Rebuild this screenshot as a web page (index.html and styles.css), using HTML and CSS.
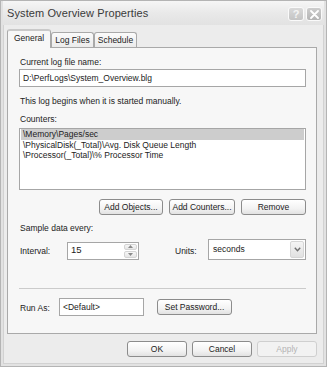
FILE: index.html
```html
<!DOCTYPE html>
<html lang="en">
<head>
    <meta charset="UTF-8">
    <title>System Overview Properties</title>
    <link rel="stylesheet" href="styles.css">
</head>
<body>
    <div class="window">
        <div class="titlebar">
            <span class="title">System Overview Properties</span>
            <div class="caption-btns">
                <span class="cap-btn">?</span>
                <span class="cap-btn close">
                    <svg width="9" height="9" viewBox="0 0 9 9">
                        <path d="M1 1 L8 8 M8 1 L1 8" stroke="#fff" stroke-width="1.8" stroke-linecap="round"/>
                    </svg>
                </span>
            </div>
        </div>

        <div class="client">
            <div class="tabs">
                <div class="tab active">General</div>
                <div class="tab">Log Files</div>
                <div class="tab">Schedule</div>
            </div>

            <div class="panel">
                <div class="label top">Current log file name:</div>
                <div class="field filename">D:\PerfLogs\System_Overview.blg</div>

                <div class="label note">This log begins when it is started manually.</div>

                <div class="label counters">Counters:</div>
                <div class="listbox">
                    <div class="item selected">\Memory\Pages/sec</div>
                    <div class="item">\PhysicalDisk(_Total)\Avg. Disk Queue Length</div>
                    <div class="item">\Processor(_Total)\% Processor Time</div>
                </div>

                <div class="btn-row">
                    <button class="btn btn-objects">Add Objects...</button>
                    <button class="btn btn-counters">Add Counters...</button>
                    <button class="btn btn-remove">Remove</button>
                </div>

                <div class="label sample">Sample data every:</div>
                <div class="interval-row">
                    <span class="row-label">Interval:</span>
                    <div class="field spin">
                        <span class="spin-value">15</span>
                        <div class="spin-btns">
                            <span class="spin-btn">
                                <svg width="5" height="3" viewBox="0 0 5 3"><path d="M0 3 L2.5 0 L5 3 Z" fill="#8a8a8a"/></svg>
                            </span>
                            <span class="spin-btn">
                                <svg width="5" height="3" viewBox="0 0 5 3"><path d="M0 0 L2.5 3 L5 0 Z" fill="#8a8a8a"/></svg>
                            </span>
                        </div>
                    </div>
                    <span class="row-label units-label">Units:</span>
                    <div class="field select">
                        <span class="select-value">seconds</span>
                        <span class="drop-btn">
                            <svg width="7" height="5" viewBox="0 0 7 5"><path d="M0.8 0.8 L3.5 3.8 L6.2 0.8" fill="none" stroke="#707070" stroke-width="1.4"/></svg>
                        </span>
                    </div>
                </div>

                <div class="separator"></div>

                <div class="runas-row">
                    <span class="row-label">Run As:</span>
                    <div class="field runas">&lt;Default&gt;</div>
                    <button class="btn btn-password">Set Password...</button>
                </div>
            </div>

            <div class="footer">
                <button class="btn btn-footer">OK</button>
                <button class="btn btn-footer">Cancel</button>
                <button class="btn btn-footer" disabled>Apply</button>
            </div>
        </div>
    </div>
</body>
</html>
```

FILE: styles.css
```css
* {
    margin: 0;
    padding: 0;
    box-sizing: border-box;
}

body {
    background-color: #ffffff;
    font-family: "Liberation Sans", Arial, sans-serif;
    font-size: 8.5px;
    line-height: 11px;
    color: #222;
}

.window {
    width: 327px;
    height: 367px;
    border: 1px solid #b4b4b4;
    background-color: #e2e2e2;
    padding: 0 2px 2px 2px;
    display: flex;
    flex-direction: column;
}

.titlebar {
    height: 24px;
    display: flex;
    align-items: center;
    justify-content: space-between;
    padding: 0 2px 0 4px;
    background: linear-gradient(to bottom, #f6f6f6 0%, #e9e9e9 50%, #e2e2e2 100%);
}

.title {
    font-size: 11px;
    color: #3a3a3a;
    letter-spacing: 0.1px;
}

.caption-btns {
    display: flex;
    gap: 2px;
    margin-top: 2px;
}

.cap-btn {
    width: 16px;
    height: 14px;
    border: 1px solid #fafafa;
    border-radius: 3px;
    background: linear-gradient(to bottom, #d9d9d9, #c4c4c4);
    color: #f4f4f4;
    font-size: 11px;
    font-weight: bold;
    display: flex;
    align-items: center;
    justify-content: center;
}

.cap-btn.close {
    background: linear-gradient(to bottom, #cdcdcd, #b4b4b4);
}

.client {
    flex: 1;
    background-color: #ececec;
    border: 1px solid #d2d2d2;
    border-top: none;
    padding: 4px 6px 0 3px;
}

.tabs {
    display: flex;
    align-items: flex-end;
    height: 18px;
}

.tab {
    height: 15px;
    padding: 0 3px;
    border: 1px solid #a9a9a9;
    border-bottom: none;
    border-radius: 3px 3px 0 0;
    background: linear-gradient(to bottom, #fbfbfb, #ebebeb);
    line-height: 14px;
    color: #222;
}

.tab.active {
    height: 19px;
    margin-bottom: -1px;
    padding: 0 6px;
    background: #f7f7f7;
    border-top: 2px solid #c9c9c9;
    line-height: 15px;
    position: relative;
    z-index: 1;
}

.panel {
    height: 287px;
    border: 1px solid #a9a9a9;
    background-color: #f7f7f7;
    padding: 9px 10px 0 11px;
}

.label {
    padding-left: 1px;
    height: 11px;
}

.field {
    background-color: #fff;
    border: 1px solid #a6a6a6;
}

.filename {
    margin-top: 1px;
    height: 18px;
    padding: 3px 0 0 3px;
}

.note {
    margin-top: 9px;
}

.counters {
    margin-top: 7px;
}

.listbox {
    margin-top: 3px;
    height: 62px;
    background-color: #fff;
    border: 1px solid #a6a6a6;
    padding: 0 1px;
}

.item {
    height: 10.5px;
    line-height: 10.5px;
    padding-left: 2px;
}

.item.selected {
    background-color: #cdcdcd;
}

.btn-row {
    margin-top: 9px;
    display: flex;
    justify-content: flex-end;
    gap: 6px;
}

.btn {
    height: 16px;
    font-family: inherit;
    font-size: 8.5px;
    color: #222;
    border: 1px solid #8c8c8c;
    border-radius: 3px;
    background: linear-gradient(to bottom, #ffffff 0%, #f3f3f3 60%, #e2e2e2 100%);
}

.btn-objects {
    width: 64px;
}

.btn-counters {
    width: 66px;
}

.btn-remove {
    width: 65px;
}

.sample {
    margin-top: 8px;
}

.interval-row {
    margin-top: 5px;
    height: 21px;
    display: flex;
    align-items: center;
}

.row-label {
    padding-left: 1px;
    width: 48px;
    padding-top: 3px;
}

.spin {
    width: 72px;
    height: 18px;
    margin-top: 2px;
    display: flex;
    justify-content: space-between;
    padding: 1px 1px 1px 3px;
}

.spin-value {
    font-size: 9.5px;
}

.spin-btns {
    width: 13px;
    display: flex;
    flex-direction: column;
    gap: 1px;
}

.spin-btn {
    flex: 1;
    border: 1px solid #d4d4d4;
    border-radius: 2px;
    background: linear-gradient(to bottom, #f7f7f7, #e6e6e6);
    display: flex;
    align-items: center;
    justify-content: center;
}

.units-label {
    width: 34px;
    margin-left: 35px;
}

.select {
    width: 98px;
    height: 21px;
    display: flex;
    align-items: center;
    justify-content: space-between;
    padding: 1px;
}

.select-value {
    padding-left: 3px;
}

.drop-btn {
    width: 14px;
    height: 17px;
    border: 1px solid #d6d6d6;
    border-radius: 2px;
    background: linear-gradient(to bottom, #f5f5f5, #e1e1e1);
    display: flex;
    align-items: center;
    justify-content: center;
}

.separator {
    margin-top: 28px;
    height: 1px;
    background-color: #cbcbcb;
}

.runas-row {
    margin-top: 9px;
    display: flex;
    align-items: center;
}

.runas-row .row-label {
    width: 40px;
}

.runas {
    width: 85px;
    height: 18px;
    padding: 3px 0 0 3px;
}

.btn-password {
    width: 75px;
    margin-left: 13px;
}

.footer {
    margin-top: 7px;
    display: flex;
    justify-content: flex-end;
    gap: 5px;
}

.btn-footer {
    width: 60px;
    height: 16px;
}

.btn-footer:disabled {
    color: #b4b4b4;
    border-color: #cfcfcf;
    background: #f2f2f2;
}
```
